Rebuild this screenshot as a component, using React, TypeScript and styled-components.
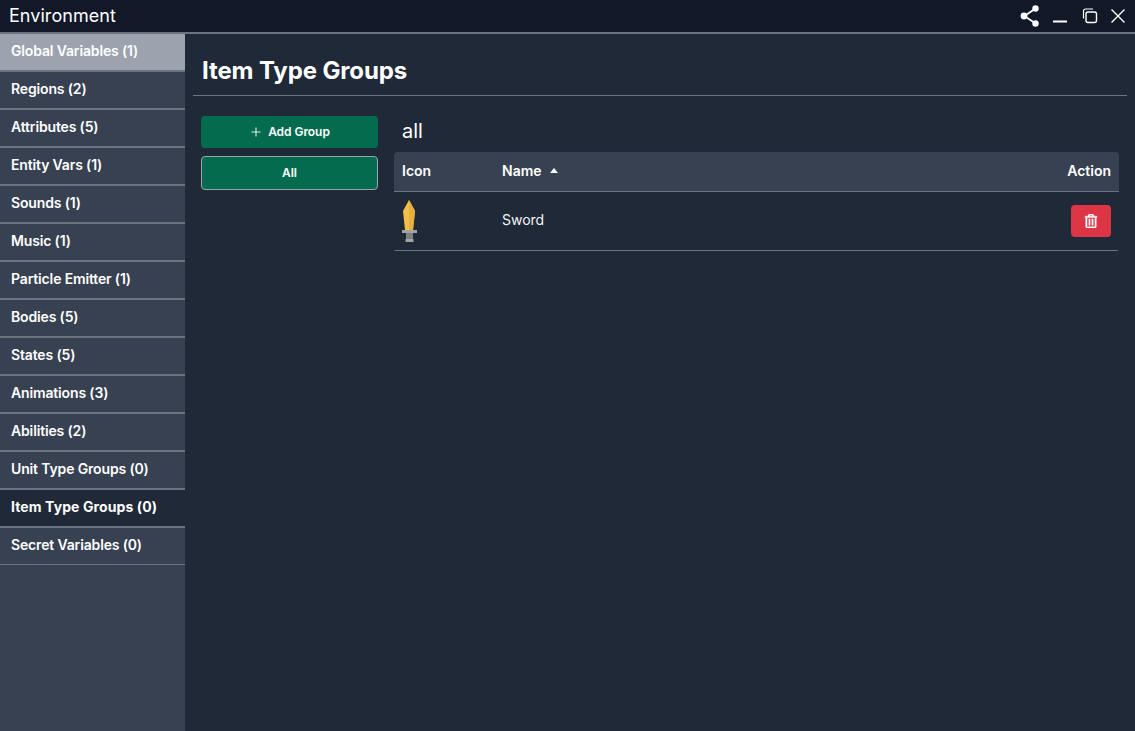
import styled, { createGlobalStyle } from 'styled-components';
import { FaRegTrashAlt } from 'react-icons/fa';

const menu = [
  'Global Variables (1)',
  'Regions (2)',
  'Attributes (5)',
  'Entity Vars (1)',
  'Sounds (1)',
  'Music (1)',
  'Particle Emitter (1)',
  'Bodies (5)',
  'States (5)',
  'Animations (3)',
  'Abilities (2)',
  'Unit Type Groups (0)',
  'Item Type Groups (0)',
  'Secret Variables (0)',
];

const App = () => {
  return (
    <>
      <GlobalStyle />
      <Page>
        <TitleBar>
          <WindowTitle>Environment</WindowTitle>
          <WindowControls>
            <ControlSvg width="20" height="22" viewBox="0 0 20 22">
              <path d="M15.500 3.500L4.500 11l11 7.500" strokeWidth="1.800" />
              <ControlDot cx="15.500" cy="3.500" r="3.200" />
              <ControlDot cx="4" cy="11" r="3.400" />
              <ControlDot cx="15.500" cy="18.500" r="3.200" />
            </ControlSvg>
            <MinimizeSvg width="16" height="16" viewBox="0 0 16 16">
              <path d="M1 13.500h14" strokeWidth="2" />
            </MinimizeSvg>
            <ControlSvg width="16" height="16" viewBox="0 0 16 16">
              <rect x="4" y="4" width="10.500" height="10.500" rx="2" strokeWidth="1.400" />
              <path d="M1.500 10.500V3A2 2 0 0 1 3.500 1H11" strokeWidth="1.200" />
            </ControlSvg>
            <ControlSvg width="16" height="16" viewBox="0 0 16 16">
              <path d="M1.500 1.500l13 13M14.500 1.500l-13 13" strokeWidth="1.400" />
            </ControlSvg>
          </WindowControls>
        </TitleBar>
        <Body>
          <Sidebar>
            {menu.map((label, i) => (
              <MenuItem key={label} $first={i === 0} $active={i === 12} $last={i === menu.length - 1}>
                {label}
              </MenuItem>
            ))}
          </Sidebar>
          <Main>
            <Heading>Item Type Groups</Heading>
            <Columns>
              <GroupColumn>
                <GroupButton>
                  <PlusSign viewBox="0 0 10 10">
                    <path d="M5 .5v9M.5 5h9" />
                  </PlusSign>
                  Add Group
                </GroupButton>
                <GroupButton $selected>All</GroupButton>
              </GroupColumn>
              <TableColumn>
                <GroupName>all</GroupName>
                <Table>
                  <thead>
                    <tr>
                      <HeadCell $width={100}>Icon</HeadCell>
                      <HeadCell>
                        Name
                        <SortArrow />
                      </HeadCell>
                      <HeadCell $right>Action</HeadCell>
                    </tr>
                  </thead>
                  <tbody>
                    <tr>
                      <BodyCell>
                        <SwordIcon width="16" height="42" viewBox="0 0 16 42">
                          <path d="M7 0l6 11-2 19H3L1 11z" fill="#f2bf4b" />
                          <path d="M7 0l6 11-2 19H7z" fill="#e6b03e" />
                          <rect x="0" y="30" width="15" height="3" fill="#a3a3a3" />
                          <rect x="4" y="33" width="7" height="6" fill="#808080" />
                          <rect x="3.500" y="39" width="8" height="3" fill="#a3a3a3" />
                        </SwordIcon>
                      </BodyCell>
                      <BodyCell $text>Sword</BodyCell>
                      <BodyCell $right>
                        <DeleteButton>
                          <TrashIcon size={14} />
                        </DeleteButton>
                      </BodyCell>
                    </tr>
                  </tbody>
                </Table>
              </TableColumn>
            </Columns>
          </Main>
        </Body>
      </Page>
    </>
  );
};

export default App;

const GlobalStyle = createGlobalStyle`
  html, body {
    margin: 0;
    padding: 0;
    background: #1f2937;
  }
  * {
    box-sizing: border-box;
  }
`;

const Page = styled.div`
  width: 1135px;
  height: 731px;
  overflow: hidden;
  display: flex;
  flex-direction: column;
  background: #1f2937;
  color: #fff;
  font-family: Inter, 'Noto Sans', sans-serif;
`;

const TitleBar = styled.div`
  height: 34px;
  flex: none;
  display: flex;
  align-items: center;
  justify-content: space-between;
  padding: 0 9px 1px 9px;
  background: #111827;
  border-bottom: 2px solid #6b7280;
`;

const WindowTitle = styled.div`
  font-size: 18px;
  font-weight: 400;
  letter-spacing: 0.05px;
`;

const WindowControls = styled.div`
  display: flex;
  align-items: center;
  gap: 12px;
`;

const ControlSvg = styled.svg`
  display: block;
  fill: none;
  stroke: #fff;
`;

const MinimizeSvg = styled(ControlSvg)`
  margin-right: 2px;
`;

const ControlDot = styled.circle`
  fill: #fff;
  stroke: none;
`;

const Body = styled.div`
  flex: 1;
  display: flex;
  min-height: 0;
`;

const Sidebar = styled.nav`
  width: 185px;
  flex: none;
  background: #374151;
`;

const MenuItem = styled.div<{ $first?: boolean; $active?: boolean; $last?: boolean }>`
  height: ${(p) => (p.$last ? '37px' : '38px')};
  display: flex;
  align-items: center;
  padding: 0 0 3px 11px;
  font-size: 14px;
  font-weight: ${(p) => (p.$active ? 700 : 600)};
  letter-spacing: ${(p) => (p.$active ? '0.1px' : '-0.15px')};
  background: ${(p) => (p.$first ? '#9ca3af' : p.$active ? '#1f2937' : '#374151')};
  border-bottom: ${(p) => (p.$last ? '1px' : '2px')} solid #6b7280;
`;

const Main = styled.main`
  flex: 1;
  min-width: 0;
  padding: 0 8px;
`;

const Heading = styled.h1`
  margin: 0;
  height: 62px;
  padding: 20px 0 0 9px;
  font-size: 24px;
  line-height: 34px;
  font-weight: 700;
  letter-spacing: -0.12px;
  border-bottom: 1px solid #6b7280;
`;

const Columns = styled.div`
  display: flex;
  align-items: flex-start;
  gap: 16px;
  padding: 20px 0 0 8px;
`;

const GroupColumn = styled.div`
  width: 177px;
  flex: none;
  display: flex;
  flex-direction: column;
  gap: 8px;
`;

const GroupButton = styled.button<{ $selected?: boolean }>`
  display: flex;
  align-items: center;
  justify-content: center;
  gap: 7px;
  height: ${(p) => (p.$selected ? '34px' : '32px')};
  padding: 0 0 1px ${(p) => (p.$selected ? '0' : '2px')};
  border-radius: 4px;
  border: ${(p) => (p.$selected ? '1px solid #9ca3af' : 'none')};
  background: #046c4e;
  color: #fff;
  font-family: inherit;
  font-size: 12px;
  font-weight: 600;
  letter-spacing: -0.05px;
`;

const PlusSign = styled.svg`
  width: 10px;
  height: 10px;
  fill: none;
  stroke: #e5e7eb;
  stroke-width: 1.1;
`;

const TableColumn = styled.div`
  width: 725px;
  flex: none;
`;

const GroupName = styled.div`
  height: 36px;
  padding: 3px 0 0 8px;
  font-size: 20px;
  line-height: 24px;
`;

const Table = styled.table`
  width: 100%;
  border-collapse: separate;
  border-spacing: 0;
  font-size: 14px;
`;

const HeadCell = styled.th<{ $width?: number; $right?: boolean }>`
  width: ${(p) => (p.$width ? `${p.$width}px` : 'auto')};
  height: 40px;
  padding: 0 8px 3px;
  text-align: ${(p) => (p.$right ? 'right' : 'left')};
  font-weight: 600;
  background: #374151;
  border-bottom: 1px solid #6b7280;
  &:first-child {
    border-top-left-radius: 4px;
  }
  &:last-child {
    border-top-right-radius: 4px;
  }
`;

const SortArrow = styled.span`
  display: inline-block;
  margin-left: 8px;
  vertical-align: 3px;
  border-left: 4.5px solid transparent;
  border-right: 4.5px solid transparent;
  border-bottom: 5px solid #fff;
`;

const BodyCell = styled.td<{ $right?: boolean; $text?: boolean }>`
  height: 59px;
  padding: 0 8px ${(p) => (p.$text ? '3px' : '0')};
  text-align: ${(p) => (p.$right ? 'right' : 'left')};
  font-weight: 400;
  color: #f3f4f6;
  border-bottom: 1px solid #6b7280;
  &:first-child {
    padding-left: 7px;
    border-left: 1px solid transparent;
  }
  &:last-child {
    padding-right: 6px;
    border-right: 2px solid transparent;
  }
`;

const SwordIcon = styled.svg`
  display: block;
`;

const DeleteButton = styled.button`
  display: inline-flex;
  align-items: center;
  justify-content: center;
  vertical-align: middle;
  width: 40px;
  height: 32px;
  padding: 0;
  border: none;
  border-radius: 4px;
  background: #dc3545;
  color: #fff;
`;

const TrashIcon = styled(FaRegTrashAlt)`
  stroke: currentColor;
  stroke-width: 14px;
`;
